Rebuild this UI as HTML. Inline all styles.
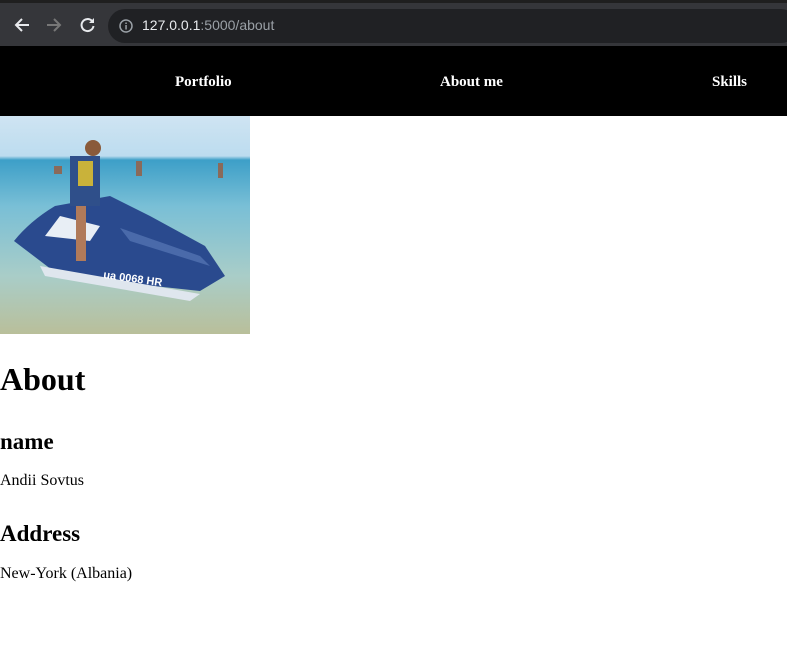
<!DOCTYPE html>
<html><head><meta charset="utf-8"><style>
*{margin:0;padding:0;box-sizing:border-box}
body{width:787px;height:650px;overflow:hidden;background:#fff;font-family:"Liberation Serif",serif;position:relative}
.top{position:absolute;left:0;top:0;width:787px;height:46px;background:#35363a;border-top:3px solid #1f1f1f}
.url{position:absolute;left:108px;top:6px;width:690px;height:34px;border-radius:17px;background:#202124}
.url span{position:absolute;left:34px;top:8px;font:14px "Liberation Sans",sans-serif;color:#9aa0a6}
.url b{font-weight:normal;color:#e8eaed}
.nav{position:absolute;top:46px;left:0;width:787px;height:70px;background:#000}
.nav a{position:absolute;top:28px;color:#fff;font-weight:bold;font-size:15px;text-decoration:none}
.photo{position:absolute;left:0;top:116px;width:250px;height:218px;background:linear-gradient(#cfe4f2 0,#bcdcef 40px,#3d9fc8 44px,#79bfd6 90px,#a9cdc8 160px,#b9bf9a 218px);overflow:hidden}
h1{position:absolute;left:0;top:361px;font-size:32px;font-weight:bold}
h3{position:absolute;left:0;font-size:23px;font-weight:bold}
p{position:absolute;left:0;font-size:16px}
</style></head><body>
<div class="top">
<svg style="position:absolute;left:12px;top:10px" width="90" height="24" viewBox="0 0 90 24">
<path d="M17 12H5M10 6l-6 6 6 6" stroke="#e8eaed" stroke-width="2" fill="none"/>
<path d="M35 12h12M42 6l6 6-6 6" stroke="#777" stroke-width="2" fill="none"/>
<path d="M80 8a6 6 0 1 0 1.5 5" stroke="#e8eaed" stroke-width="2" fill="none"/><path d="M82 5v5h-5z" fill="#e8eaed"/>
</svg>
<div class="url"><svg style="position:absolute;left:11px;top:10px" width="14" height="14"><circle cx="7" cy="7" r="6" stroke="#9aa0a6" stroke-width="1.5" fill="none"/><rect x="6.3" y="6" width="1.5" height="4.5" fill="#9aa0a6"/><rect x="6.3" y="3.5" width="1.5" height="1.5" fill="#9aa0a6"/></svg><span><b>127.0.0.1</b>:5000/about</span></div>
</div>
<div class="nav"><a style="left:175px">Portfolio</a><a style="left:440px">About me</a><a style="left:712px">Skills</a></div>
<div class="photo">
<svg width="250" height="218" viewBox="0 0 250 218">
<path d="M14 125 Q30 105 55 90 L110 80 L150 100 L205 130 L225 160 L200 175 L60 160 Z" fill="#2a4a8e"/>
<path d="M45 120 L60 100 L100 110 L90 125 Z" fill="#e8eef5"/>
<path d="M40 150 L200 178 L190 185 L45 160 Z" fill="#dfe6ee"/>
<path d="M120 112 L200 140 L210 150 L130 125 Z" fill="#4a6aaa"/>
<rect x="70" y="40" width="30" height="50" fill="#2f4f8a"/>
<rect x="78" y="45" width="15" height="25" fill="#c9b23a"/>
<circle cx="93" cy="32" r="8" fill="#8a5a3a"/>
<rect x="76" y="90" width="10" height="55" fill="#b07a5a"/>
<rect x="136" y="45" width="6" height="15" fill="#8a6a5a"/><rect x="218" y="47" width="5" height="15" fill="#8a6a5a"/><rect x="54" y="50" width="8" height="8" fill="#8a6a5a"/>
<text x="103" y="162" font-family="Liberation Sans" font-size="11" font-weight="bold" fill="#fff" transform="rotate(8 103 162)">ua 0068 HR</text>
</svg></div>
<h1>About</h1>
<h3 style="top:429px">name</h3>
<p style="top:472px">Andii Sovtus</p>
<h3 style="top:521px">Address</h3>
<p style="top:565px">New-York (Albania)</p>
</body></html>
